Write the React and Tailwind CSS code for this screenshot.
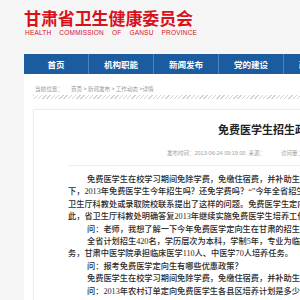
import React from 'react';

const NAV = ['首页', '机构职能', '新闻发布', '党的建设', '政务公开', '办事服务', '互动交流'];

const LINES = [
  { indent: true,  text: '免费医学生在校学习期间免除学费，免缴住宿费，并补助生活费。近日，不少考生和家长' },
  { indent: false, text: '下，2013年免费医学生今年招生吗？还免学费吗？“”今年全省招生计划是多少？带着这些' },
  { indent: false, text: '卫生厅科教处或录取院校联系提出了这样的问题。免费医学生定向就业的政策是怎样的？' },
  { indent: false, text: '此，省卫生厅科教处明确答复2013年继续实施免费医学生培养工作。' },
  { indent: true,  text: '问：老师，我想了解一下今年免费医学定向生在甘肃的招生计划？' },
  { indent: true,  text: '全省计划招生420名，学历层次为本科，学制5年，专业为临床医学和中医学，兰州大学' },
  { indent: false, text: '务，甘肃中医学院承担临床医学110人、中医学70人培养任务。' },
  { indent: true,  text: '问：报考免费医学定向生有哪些优惠政策？' },
  { indent: true,  text: '免费医学生在校学习期间免除学费，免缴住宿费，并补助生活费。' },
  { indent: true,  text: '问：2013年农村订单定向免费医学生各县区培养计划是多少？' },
];

export default function App() {
  return (
    <div className="w-[300px] h-[300px] overflow-hidden bg-[#f5f5f5] font-['Noto_Sans_CJK_SC',sans-serif]">

      {/* ── Header ─────────────────────────────────────────── */}
      <header className="h-[54px] pl-[24px] pt-[9px]">
        <h1 className="text-[17px] leading-[17px] font-bold text-[#d7121b] whitespace-nowrap tracking-[-0.1px]">
          甘肃省卫生健康委员会
        </h1>
        <p className="mt-[3px] pl-[1px] text-[6.5px] leading-[7px] text-[#d7121b] whitespace-nowrap tracking-[0.2px] [word-spacing:6px] font-['Liberation_Sans',sans-serif]">
          HEALTH COMMISSION OF GANSU PROVINCE
        </p>
      </header>

      {/* ── Nav ────────────────────────────────────────────── */}
      <nav className="ml-[24px] w-[700px] h-[20px] flex bg-[#1b5b9f]">
        {NAV.map(n => (
          <div key={n} className="w-[65px] shrink-0 h-full flex items-center justify-center border-r border-[#4f82ba] text-white text-[8.5px] font-bold whitespace-nowrap">
            {n}
          </div>
        ))}
      </nav>

      {/* ── Content ────────────────────────────────────────── */}
      <main className="ml-[24px] w-[700px] h-[400px] bg-white pt-[11px]">
        <div className="pl-[11px] text-[5.6px] leading-[8px] text-[#9a9a9a] whitespace-nowrap">
          当前位置：<span className="ml-[8px]">首页 &gt; 新闻发布 &gt; 工作动态 &gt;详情</span>
        </div>
        <div className="ml-[9px] mt-[2px] h-[4px] bg-[repeating-linear-gradient(135deg,#d2d2d2_0px,#d2d2d2_1px,transparent_1px,transparent_3px)]" />

        <article className="ml-[9px] mt-[10px] w-[640px] h-[300px] border border-[#ededed] shadow-[0_0_3px_rgba(0,0,0,0.04)]">
          <h2 className="pl-[184px] pt-[13px] text-[11px] leading-[13px] font-bold text-[#222] whitespace-nowrap">
            免费医学生招生政策问答
          </h2>
          <div className="pl-[133px] mt-[14px] text-[5.5px] leading-[7px] text-[#a0a0a0] whitespace-nowrap font-['Liberation_Sans','Noto_Sans_CJK_SC',sans-serif]">
            发布时间：2013-06-24 09:19:00<span className="ml-[3px]">来源：</span><span className="ml-[16px]">访问量：</span>
          </div>
          <div className="mx-[34px] mt-[8px] border-b border-[#eeeeee]" />

          <div className="pl-[34px] mt-[8px] text-[8.2px] leading-[12.4px] text-[#2a2a2a] font-medium font-['Liberation_Serif','Noto_Sans_CJK_SC',serif]">
            {LINES.map((l, i) => (
              <p key={i} className={`whitespace-nowrap ${l.indent ? 'pl-[19px]' : ''}`}>{l.text}</p>
            ))}
          </div>
        </article>
      </main>
    </div>
  );
}
